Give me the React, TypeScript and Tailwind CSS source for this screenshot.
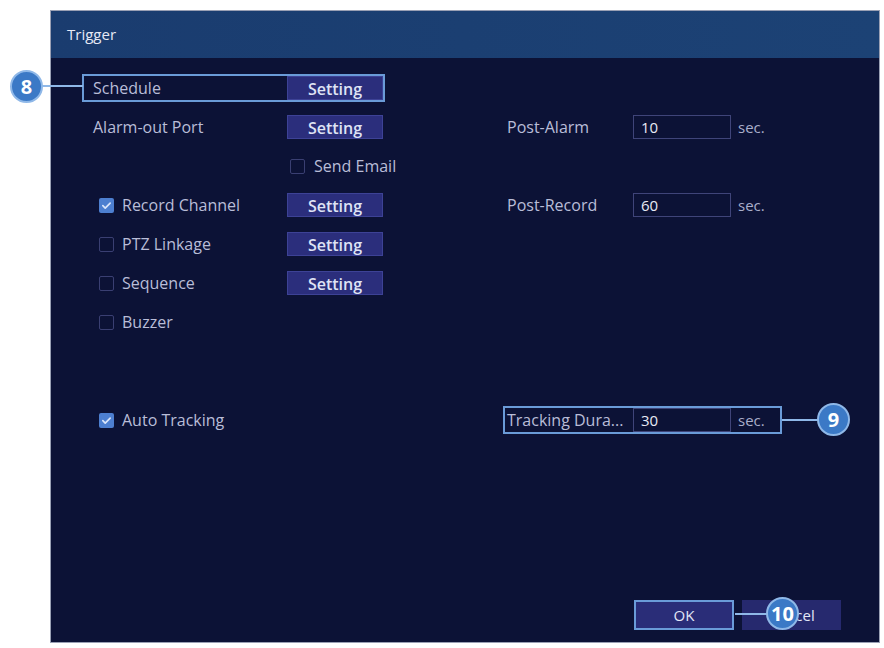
import React from "react";

type Row = {
  label?: string;
  check?: boolean | null;
  setting?: boolean;
  email?: boolean;
  right?: { label: string; value: string };
};

const rows: Row[] = [
  { label: "Alarm-out Port", setting: true, right: { label: "Post-Alarm", value: "10" } },
  { email: true },
  { label: "Record Channel", check: true, setting: true, right: { label: "Post-Record", value: "60" } },
  { label: "PTZ Linkage", check: false, setting: true },
  { label: "Sequence", check: false, setting: true },
  { label: "Buzzer", check: false },
];

const CheckBox: React.FC<{ on: boolean }> = ({ on }) =>
  on ? (
    <span className="flex h-[15px] w-[15px] shrink-0 items-center justify-center rounded-[2px] bg-[#4d7fd0]">
      <svg width="11" height="11" viewBox="0 0 12 12" fill="none">
        <path d="M2 6.2l2.6 2.6L10 3.4" stroke="#dbe6fb" strokeWidth="1.8" strokeLinecap="round" strokeLinejoin="round" />
      </svg>
    </span>
  ) : (
    <span className="block h-[15px] w-[15px] shrink-0 rounded-[2px] border border-[#3a3f72]" />
  );

const SettingButton: React.FC = () => (
  <button className="h-[24px] w-[96px] border border-[#3d4296] bg-[#2b2e7c] text-[16px] font-semibold text-[#dfe3f5]">
    Setting
  </button>
);

const Badge: React.FC<{ n: string; className: string }> = ({ n, className }) => (
  <div
    className={`absolute flex h-[33px] w-[33px] items-center justify-center rounded-full border-2 border-[#8fb8e8] bg-[#3b79c6] text-[20px] font-bold text-white ${className}`}
  >
    {n}
  </div>
);

const RightField: React.FC<{ label: string; value: string; hot?: boolean }> = ({ label, value, hot }) => (
  <div
    className={`flex h-[28px] w-[279px] items-center border-2 ${hot ? "border-[#6a9bd8]" : "border-transparent"}`}
  >
    <span className="block w-[128px] whitespace-nowrap pl-[2px] text-[16px] font-medium text-[#b9bdd8]">{label}</span>
    <span className="flex h-[24px] w-[98px] items-center border border-[#3f4479] pl-[7px] text-[15px] font-medium text-[#e8eaf5]">
      {value}
    </span>
    <span className="pl-[7px] text-[15px] text-[#a9aecb]">sec.</span>
  </div>
);

const LeftLabel: React.FC<{ label: string; check?: boolean | null }> = ({ label, check }) => (
  <div className="flex w-[203px] items-center gap-[8px]">
    {check === undefined || check === null ? (
      <span className="pl-[9px] text-[16px] font-medium text-[#b9bdd8]">{label}</span>
    ) : (
      <>
        <span className="block pl-[15px]">
          <CheckBox on={check} />
        </span>
        <span className="text-[16px] font-medium text-[#b9bdd8]">{label}</span>
      </>
    )}
  </div>
);

export default function App() {
  return (
    <div className="relative h-[648px] w-[884px] overflow-hidden bg-white font-['Open_Sans',sans-serif]">
      <div className="ml-[50px] mt-[10px] flex h-[633px] w-[830px] flex-col border border-[#9aa0b4] bg-[#0c1236]">
        <div className="flex h-[47px] items-center bg-gradient-to-r from-[#1a3c6f] to-[#1c4275] pl-[16px] text-[15px] font-medium text-[#e6e9f5]">
          Trigger
        </div>

        <div className="flex flex-1 flex-col pl-[31px] pt-[16px]">
          <div className="flex flex-col gap-[11px]">
            {/* schedule */}
            <div className="flex h-[28px] w-[303px] items-center border-2 border-[#6a9bd8]">
              <span className="w-[203px] pl-[9px] text-[16px] font-medium text-[#b9bdd8]">Schedule</span>
              <SettingButton />
            </div>

            {rows.map((r, i) => (
              <div key={i} className="flex h-[28px] items-center">
                <div className="flex h-[28px] w-[303px] shrink-0 items-center whitespace-nowrap border-2 border-transparent">
                  {r.email ? (
                    <>
                      <div className="w-[203px] shrink-0" />
                      <div className="flex items-center gap-[9px] pl-[3px]">
                        <CheckBox on={false} />
                        <span className="text-[16px] font-medium text-[#b9bdd8]">Send Email</span>
                      </div>
                    </>
                  ) : (
                    <>
                      <LeftLabel label={r.label ?? ""} check={r.check} />
                      {r.setting && <SettingButton />}
                    </>
                  )}
                </div>
                {r.right && (
                  <div className="ml-[118px]">
                    <RightField label={r.right.label} value={r.right.value} />
                  </div>
                )}
              </div>
            ))}

            <div className="mt-[59px] flex h-[28px] items-center">
              <div className="flex h-[28px] w-[303px] items-center border-2 border-transparent">
                <LeftLabel label="Auto Tracking" check={true} />
              </div>
              <div className="ml-[118px]">
                <RightField label="Tracking Dura..." value="30" hot />
              </div>
            </div>
          </div>
        </div>

        <div className="flex justify-end gap-[8px] pb-[12px] pr-[38px]">
          <button className="h-[30px] w-[100px] border-2 border-[#6a9bd8] bg-[#2a2d78] text-[15px] font-medium text-[#e3e6f6]">
            OK
          </button>
          <button className="h-[30px] w-[99px] bg-[#26296e] text-[15px] font-medium text-[#e3e6f6]">Cancel</button>
        </div>
      </div>

      {/* callout markers */}
      <div className="absolute left-[42px] top-[85px] h-[2px] w-[41px] bg-[#8fb8e8]" />
      <Badge n="8" className="left-[10px] top-[70px]" />

      <div className="absolute left-[782px] top-[419px] h-[2px] w-[36px] bg-[#8fb8e8]" />
      <Badge n="9" className="left-[817px] top-[403px]" />

      <div className="absolute left-[735px] top-[613px] h-[2px] w-[32px] bg-[#8fb8e8]" />
      <Badge n="10" className="left-[766px] top-[597px]" />
    </div>
  );
}
